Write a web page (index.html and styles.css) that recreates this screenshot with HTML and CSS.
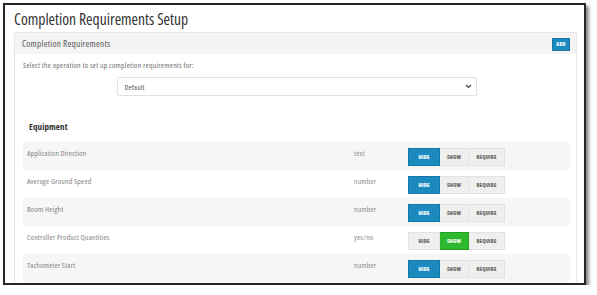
FILE: index.html
```html
<!DOCTYPE html>
<html>
<head>
<meta charset="utf-8">
<link rel="stylesheet" href="styles.css">
</head>
<body>
<div class="frame">
  <h1 class="title">Completion Requirements Setup</h1>
  <div class="panel">
    <div class="panel-head">
      <span class="panel-title">Completion Requirements</span>
      <button class="btn-add">ADD</button>
    </div>
    <div class="panel-body">
      <p class="hint">Select the operation to set up completion requirements for:</p>
      <div class="select">
        <span>Default</span>
        <svg class="chev" width="7" height="5" viewBox="0 0 7 5"><path d="M1 1 L3.5 3.5 L6 1" fill="none" stroke="#444" stroke-width="1.2"/></svg>
      </div>
      <h2 class="section">Equipment</h2>
      <div class="rows">
        <div class="row">
          <span class="label">Application Direction</span>
          <span class="type">text</span>
          <div class="group"><span class="b hide on-blue">HIDE</span><span class="b show">SHOW</span><span class="b req">REQUIRE</span></div>
        </div>
        <div class="row">
          <span class="label">Average Ground Speed</span>
          <span class="type">number</span>
          <div class="group"><span class="b hide on-blue">HIDE</span><span class="b show">SHOW</span><span class="b req">REQUIRE</span></div>
        </div>
        <div class="row">
          <span class="label">Boom Height</span>
          <span class="type">number</span>
          <div class="group"><span class="b hide on-blue">HIDE</span><span class="b show">SHOW</span><span class="b req">REQUIRE</span></div>
        </div>
        <div class="row">
          <span class="label">Controller Product Quantities</span>
          <span class="type">yes/no</span>
          <div class="group"><span class="b hide">HIDE</span><span class="b show on-green">SHOW</span><span class="b req">REQUIRE</span></div>
        </div>
        <div class="row">
          <span class="label">Tachometer Start</span>
          <span class="type">number</span>
          <div class="group"><span class="b hide on-blue">HIDE</span><span class="b show">SHOW</span><span class="b req">REQUIRE</span></div>
        </div>
      </div>
    </div>
  </div>
</div>
</body>
</html>
```
FILE: styles.css
```css
html, body {
  margin: 0;
  padding: 0;
  background: #fff;
}
body {
  font-family: "Open Sans", Lato, sans-serif;
  font-stretch: 75%;
  color: #555;
}
.frame {
  margin: 3px 0 0 3px;
  height: 278px;
  width: 563px;
  border: 2px solid #262626;
  box-shadow: 3px 3px 3px rgba(0,0,0,0.45);
  overflow: hidden;
  padding: 0 7px 0 9px;
}
.title {
  margin: 0;
  height: 27px;
  padding-top: 4px;
  box-sizing: border-box;
  font-size: 15.6px;
  line-height: 20px;
  font-weight: 400;
  color: #333;
}
.panel {
  border: 1px solid #e6e6e6;
  border-bottom: none;
}
.panel-head {
  background: #f4f4f4;
  height: 21px;
  display: flex;
  align-items: center;
  justify-content: space-between;
  padding: 0 6px 0 7px;
}
.panel-title {
  font-size: 9.2px;
  letter-spacing: 0.25px;
  color: #555;
}
.btn-add {
  border: 1px solid #1778a6;
  background: #1b8bbf;
  color: #fff;
  font-family: inherit;
  font-stretch: inherit;
  font-size: 5px;
  font-weight: 800;
  letter-spacing: 0.2px;
  width: 18px;
  height: 13px;
  padding: 0;
  margin-top: 1px;
}
.panel-body {
  padding: 0 6px 0 8px;
}
.hint {
  margin: 0;
  padding-top: 6px;
  font-size: 7.8px;
  letter-spacing: 0.2px;
  line-height: 10px;
  color: #707070;
}
.select {
  width: 347px;
  height: 17px;
  margin: 7px auto 0;
  border: 1px solid #e0e0e0;
  border-radius: 2px;
  display: flex;
  align-items: center;
  justify-content: space-between;
  padding: 0 4px 0 7px;
  font-size: 7.6px;
  letter-spacing: 0.15px;
  color: #555;
}
.chev {
  display: block;
}
.section {
  margin: 0;
  padding: 25px 0 0 6px;
  font-size: 9px;
  letter-spacing: 0.1px;
  line-height: 12px;
  height: 46px;
  box-sizing: border-box;
  font-weight: 700;
  color: #333;
}
.rows {
  display: flex;
  flex-direction: column;
}
.row {
  display: grid;
  grid-template-columns: 327px 54px auto;
  height: 28px;
  padding: 6px 0 0 4px;
  box-sizing: border-box;
  align-items: start;
}
.row:nth-child(odd) {
  background: #f6f6f6;
}
.label, .type {
  font-size: 7.8px;
  letter-spacing: 0.15px;
  line-height: 10px;
  color: #858585;
}
.type {
  color: #8c8c8c;
}
.group {
  display: flex;
  height: 18px;
}
.b {
  display: flex;
  align-items: center;
  justify-content: center;
  height: 18px;
  box-sizing: border-box;
  background: #efefef;
  border: 1px solid #e2e2e2;
  font-size: 5.4px;
  letter-spacing: 0.2px;
  font-weight: 800;
  color: #666;
}
.hide { width: 32px; }
.show { width: 29px; border-left: none; }
.req { width: 36px; border-left: none; }
.on-blue {
  background: #1b8bbf;
  border-color: #1778a6;
  color: #fff;
}
.on-green {
  background: #2eb82e;
  border-color: #24a024;
  color: #fff;
}
```
